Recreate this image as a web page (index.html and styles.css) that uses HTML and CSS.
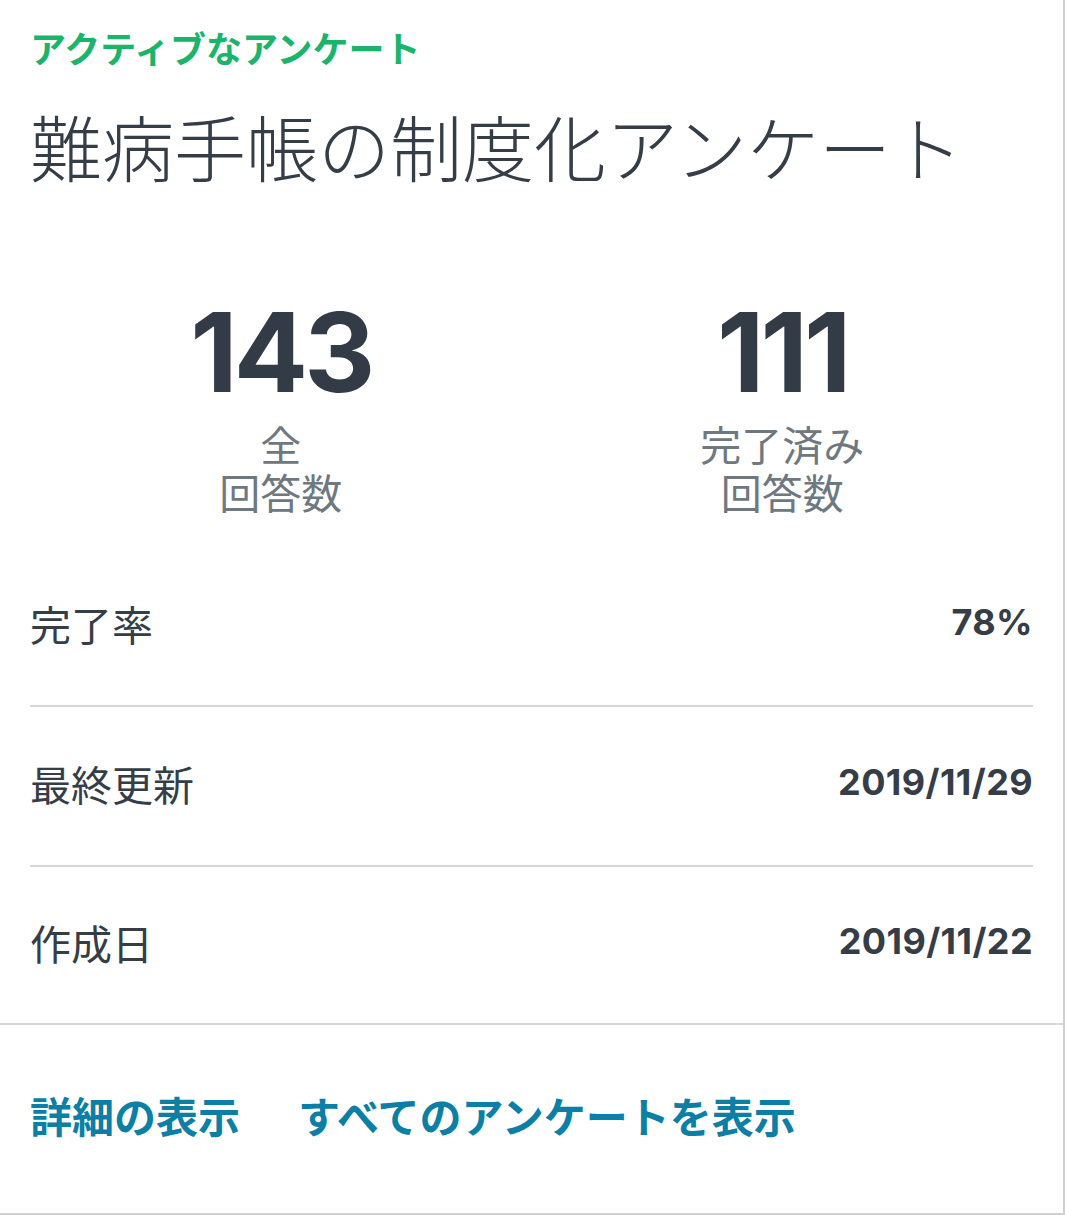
FILE: index.html
```html
<!DOCTYPE html>
<html lang="ja">
<head>
    <meta charset="UTF-8">
    <meta name="viewport" content="width=device-width, initial-scale=1.0">
    <title>アクティブなアンケート</title>
    <link rel="stylesheet" href="styles.css">
</head>
<body>
    <div class="card">
        <div class="card-body">
            <div class="eyebrow">アクティブなアンケート</div>
            <h1 class="survey-title">難病手帳の制度化アンケート</h1>

            <div class="stats">
                <div class="stat">
                    <div class="stat-num">143</div>
                    <div class="stat-label">全<br>回答数</div>
                </div>
                <div class="stat">
                    <div class="stat-num">111</div>
                    <div class="stat-label">完了済み<br>回答数</div>
                </div>
            </div>

            <ul class="info-list">
                <li class="info-row">
                    <span class="info-label">完了率</span>
                    <span class="info-value">78%</span>
                </li>
                <li class="info-row">
                    <span class="info-label">最終更新</span>
                    <span class="info-value">2019/11/29</span>
                </li>
                <li class="info-row">
                    <span class="info-label">作成日</span>
                    <span class="info-value">2019/11/22</span>
                </li>
            </ul>
        </div>
        <div class="card-footer">
            <a href="#">詳細の表示</a>
            <a href="#">すべてのアンケートを表示</a>
        </div>
    </div>
</body>
</html>
```

FILE: styles.css
```css
body {
    margin: 0;
    padding: 0;
    background-color: #fff;
    font-family: "Noto Sans CJK JP", "Noto Sans", sans-serif;
    color: #353d47;
}
.card {
    width: 1065px;
    height: 1215px;
    box-sizing: border-box;
    border-right: 2px solid #d0d0d0;
    border-bottom: 2px solid #d0d0d0;
    display: flex;
    flex-direction: column;
}
.card-body {
    padding: 23px 30px 0 30px;
}
.eyebrow {
    font-size: 36px;
    line-height: 48px;
    font-weight: 700;
    color: #1bb46b;
}
.survey-title {
    margin: 34px 0 0 0;
    font-size: 72px;
    line-height: 80px;
    font-weight: 300;
    color: #353d47;
}
.stats {
    display: grid;
    grid-template-columns: 1fr 1fr;
    margin-top: 114px;
    text-align: center;
}
.stat-num {
    font-family: Inter, Roboto, sans-serif;
    font-size: 110px;
    line-height: 106px;
    font-weight: 700;
    letter-spacing: -4px;
    color: #333c46;
}
.stat-label {
    margin-top: 14px;
    font-size: 41px;
    line-height: 48px;
    color: #6e7880;
}
.info-list {
    list-style-type: none;
    margin: 32px 0 0 0;
    padding: 0;
}
.info-row {
    display: flex;
    justify-content: space-between;
    align-items: center;
    height: 158px;
    border-bottom: 2px solid #d6d6d6;
}
.info-row:last-child {
    border-bottom: none;
    height: 156px;
}
.info-label {
    font-size: 41px;
    color: #353d47;
    margin-top: -6px;
}
.info-value {
    font-family: Inter, Roboto, sans-serif;
    font-size: 36px;
    font-weight: 700;
    letter-spacing: 0.4px;
    color: #353d47;
    margin-top: -8px;
}
.card-footer {
    border-top: 2px solid #d6d6d6;
    padding: 62px 30px 0 30px;
    display: flex;
    gap: 58px;
    flex: 1;
}
.card-footer a {
    font-size: 42px;
    line-height: 56px;
    font-weight: 700;
    color: #0b7fa5;
    text-decoration: none;
}
```
